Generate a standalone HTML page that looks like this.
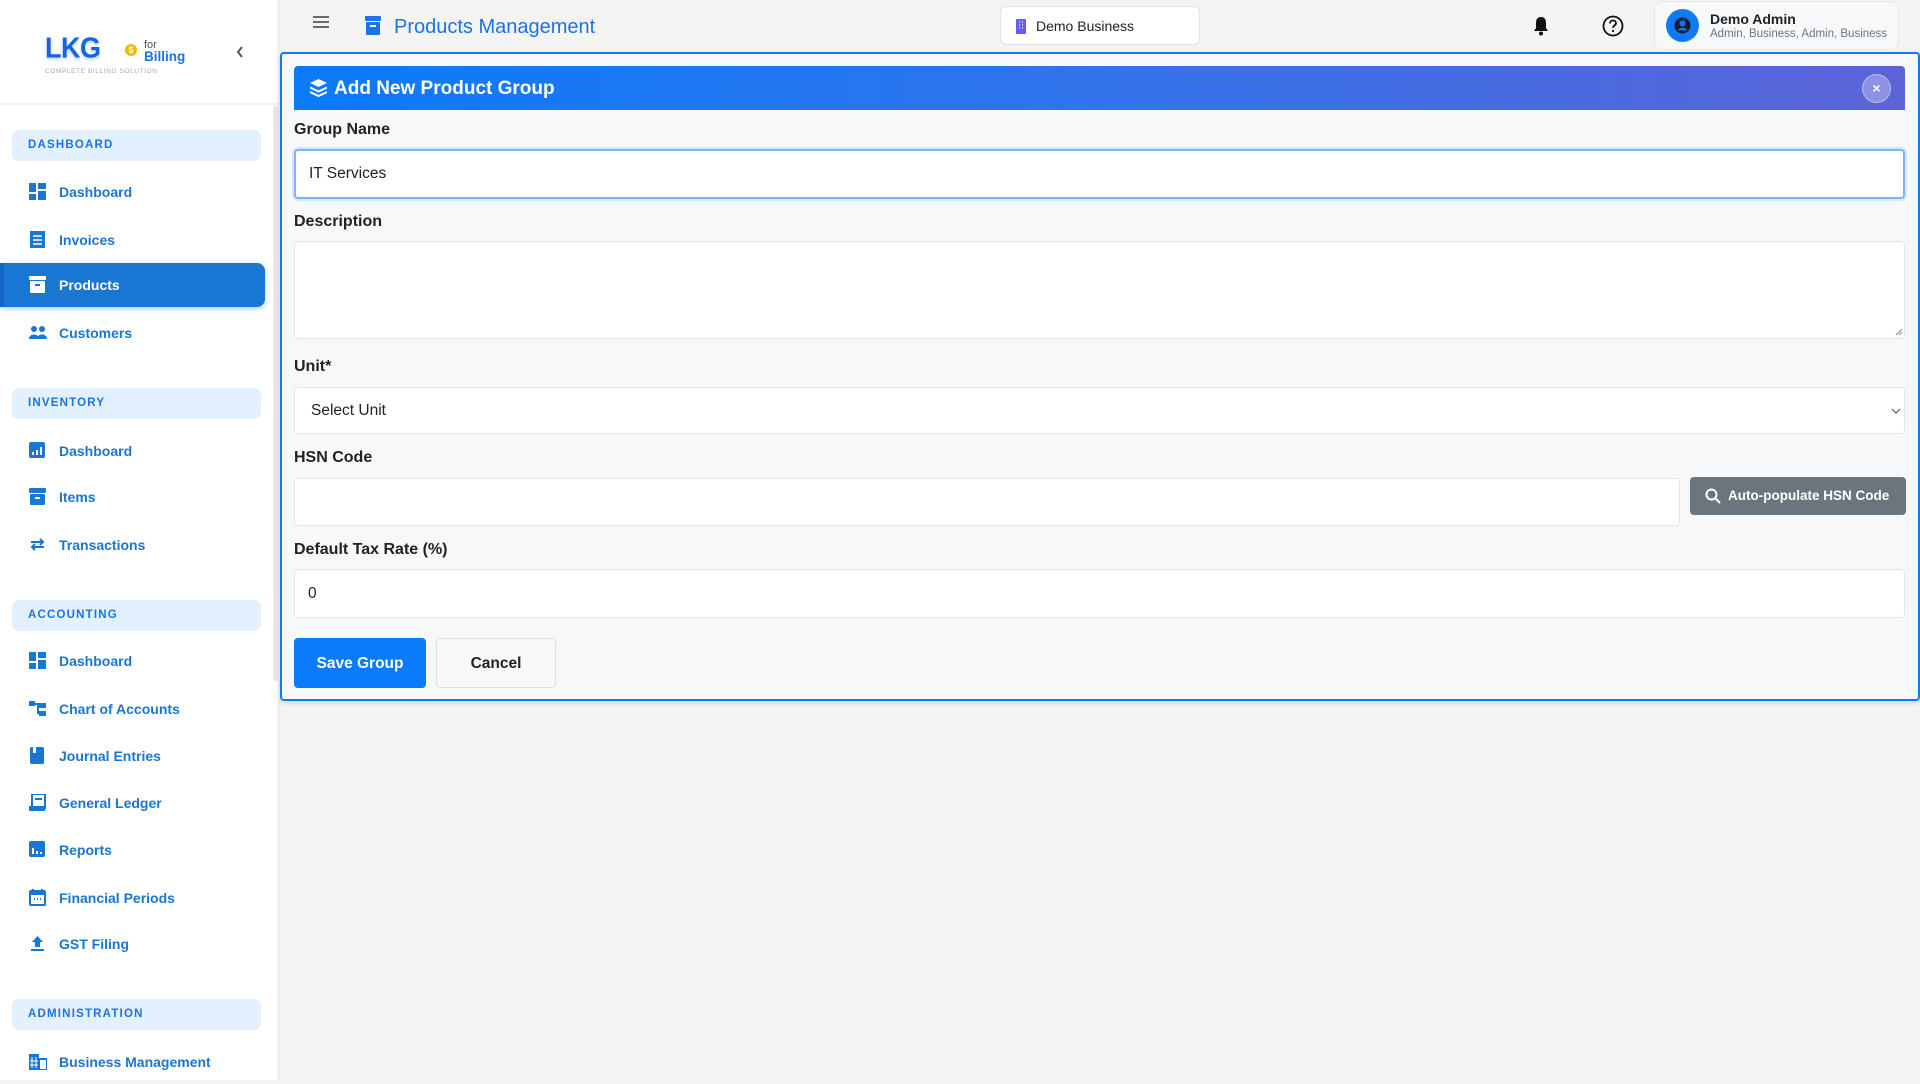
<!DOCTYPE html>
<html><head><meta charset="utf-8"><style>
*{box-sizing:border-box;margin:0;padding:0}
body{width:1920px;height:1080px;overflow:hidden;background:#f4f4f4;font-family:"Liberation Sans",sans-serif;position:relative;color:#212529}
.abs{position:absolute}
#sb{left:0;top:0;width:279px;height:1080px;background:#fff;border-right:1px solid #e6e6e6}
.sec{position:absolute;left:12px;width:249px;height:31px;background:#e3f0fd;border-radius:7px;color:#1a73e8;font-size:11.5px;font-weight:bold;letter-spacing:1.2px;padding-left:16px;line-height:31px}
.it{position:absolute;left:0;width:265px;height:44px;line-height:44px;padding-left:59px;font-size:14px;font-weight:bold;color:#1976d2}
.it svg{position:absolute;left:29px;top:13px}
.act{background:#1976d2;color:#fff;border-radius:0 8px 8px 0;border-left:4px solid #1565c0;box-shadow:0 2px 6px rgba(25,118,210,.35)}
label{position:absolute;left:294px;font-size:16px;font-weight:bold;color:#222}
.in{position:absolute;left:294px;width:1611px;background:#fff;border:1px solid #e3e5e8;border-radius:4px;font-size:15.5px;padding-left:13px;display:flex;align-items:center;color:#222}
</style></head><body>
<div id="sb" class="abs">
 <div class="abs" style="left:0;top:103px;width:279px;border-top:2px solid #eef0f2"></div>
 <div class="abs" style="left:45px;top:33px;font-size:27px;font-weight:900;color:#1565e0;letter-spacing:-0.5px;text-shadow:0 2px 3px rgba(21,101,224,.3);transform:scaleY(1.05)">LKG</div>
 <div class="abs" style="left:125px;top:44px;width:12px;height:12px;border-radius:50%;background:#f5b800;color:#fff;font-size:9px;font-weight:bold;text-align:center;line-height:12px">$</div>
 <div class="abs" style="left:144px;top:39px;font-size:11px;color:#555">for</div>
 <div class="abs" style="left:144px;top:49px;font-size:13.5px;font-weight:bold;color:#1a73e8">Billing</div>
 <div class="abs" style="left:45px;top:68px;font-size:6.5px;color:#aaa;letter-spacing:.6px">COMPLETE BILLING SOLUTION</div>
 <svg class="abs" style="left:235px;top:45px" width="10" height="14" viewBox="0 0 10 14"><path d="M7 2L3 7l4 5" stroke="#555" stroke-width="2" fill="none"/></svg>
 <div class="abs" style="left:273px;top:106px;width:6px;height:575px;background:#e8e8ea;border-radius:3px"></div>

 <div class="sec" style="top:130px">DASHBOARD</div>
 <div class="it" style="top:170px"><svg width="17" height="17"><rect x="0" y="0" width="7" height="9" fill="#1976d2"/><rect x="9" y="0" width="8" height="6" fill="#1976d2"/><rect x="0" y="11" width="7" height="6" fill="#1976d2"/><rect x="9" y="8" width="8" height="9" fill="#1976d2"/></svg>Dashboard</div>
 <div class="it" style="top:218px"><svg width="17" height="17"><rect x="1" y="0" width="15" height="17" fill="#1976d2"/><path d="M4 5h9M4 9h9M4 13h9" stroke="#fff" stroke-width="1.5"/></svg>Invoices</div>
 <div class="it act" style="top:263px;padding-left:55px"><svg width="17" height="17" style="left:25px"><rect x="0" y="0" width="17" height="4" rx="1" fill="#fff"/><rect x="1" y="5" width="15" height="12" rx="1" fill="#fff"/><rect x="6" y="8" width="5" height="2" fill="#1976d2"/></svg>Products</div>
 <div class="it" style="top:311px"><svg width="18" height="17"><circle cx="5" cy="5" r="3" fill="#1976d2"/><circle cx="13" cy="5" r="3" fill="#1976d2"/><path d="M0 15c0-6 10-6 10 0zM8 15c0-6 10-6 10 0z" fill="#1976d2"/></svg>Customers</div>

 <div class="sec" style="top:388px">INVENTORY</div>
 <div class="it" style="top:429px"><svg width="17" height="17"><rect width="16" height="16" rx="2" fill="#1976d2"/><path d="M4 13v-3M8 13v-5M12 13v-8" stroke="#fff" stroke-width="2"/></svg>Dashboard</div>
 <div class="it" style="top:475px"><svg width="17" height="17"><rect x="0" y="0" width="17" height="5" rx="1" fill="#1976d2"/><rect x="1" y="6" width="15" height="11" rx="1" fill="#1976d2"/><rect x="6" y="9" width="5" height="2" fill="#fff"/></svg>Items</div>
 <div class="it" style="top:523px"><svg width="17" height="17"><path d="M2 6h12M11 3l3 3-3 3M15 11H3M6 8l-3 3 3 3" stroke="#1976d2" stroke-width="2" fill="none"/></svg>Transactions</div>

 <div class="sec" style="top:600px">ACCOUNTING</div>
 <div class="it" style="top:639px"><svg width="17" height="17"><rect x="0" y="0" width="7" height="9" fill="#1976d2"/><rect x="9" y="0" width="8" height="6" fill="#1976d2"/><rect x="0" y="11" width="7" height="6" fill="#1976d2"/><rect x="9" y="8" width="8" height="9" fill="#1976d2"/></svg>Dashboard</div>
 <div class="it" style="top:687px"><svg width="17" height="17"><rect x="0" y="1" width="6" height="5" fill="#1976d2"/><rect x="10" y="3" width="7" height="5" fill="#1976d2"/><rect x="10" y="11" width="7" height="5" fill="#1976d2"/><path d="M6 4h3v9h1" stroke="#1976d2" stroke-width="2" fill="none"/></svg>Chart of Accounts</div>
 <div class="it" style="top:734px"><svg width="17" height="17"><rect x="1" y="0" width="14" height="17" rx="2" fill="#1976d2"/><rect x="4" y="0" width="3" height="6" fill="#fff"/></svg>Journal Entries</div>
 <div class="it" style="top:781px"><svg width="17" height="17"><rect x="3" y="0" width="13" height="14" fill="none" stroke="#1976d2" stroke-width="2"/><rect x="0" y="12" width="16" height="5" fill="#1976d2"/><path d="M6 5h7" stroke="#1976d2" stroke-width="2"/></svg>General Ledger</div>
 <div class="it" style="top:828px"><svg width="17" height="17"><rect width="16" height="16" rx="2" fill="#1976d2"/><path d="M4 13v-6M8 13v-3M12 13v-2" stroke="#fff" stroke-width="2"/></svg>Reports</div>
 <div class="it" style="top:876px"><svg width="17" height="17"><rect x="1" y="2" width="15" height="14" rx="1" fill="none" stroke="#1976d2" stroke-width="2"/><rect x="1" y="2" width="15" height="4" fill="#1976d2"/><path d="M4 0v3M13 0v3M5 10h1M8 10h1M11 10h1" stroke="#1976d2" stroke-width="2"/></svg>Financial Periods</div>
 <div class="it" style="top:922px"><svg width="17" height="17"><path d="M8.5 1L3 7h3v5h5V7h3z" fill="#1976d2"/><rect x="2" y="14" width="13" height="2" fill="#1976d2"/></svg>GST Filing</div>

 <div class="sec" style="top:999px">ADMINISTRATION</div>
 <div class="it" style="top:1040px"><svg width="18" height="17"><rect x="0" y="1" width="10" height="16" fill="#1976d2"/><rect x="10" y="6" width="8" height="11" fill="none" stroke="#1976d2" stroke-width="2"/><path d="M3 4v11M7 4v11M1 8h8M1 12h8" stroke="#fff" stroke-width="1"/></svg>Business Management</div>
</div>

<!-- topbar -->
<svg class="abs" style="left:313px;top:16px" width="16" height="12"><path d="M0 1h16M0 6h16M0 11h16" stroke="#555" stroke-width="1.8"/></svg>
<svg class="abs" style="left:365px;top:16px" width="16" height="19"><rect x="0" y="0" width="16" height="5" rx="1" fill="#1a73e8"/><rect x="1" y="6" width="14" height="13" rx="1" fill="#1a73e8"/><rect x="5" y="9" width="6" height="2" fill="#fff"/></svg>
<div class="abs" style="left:394px;top:16px;font-size:20px;color:#1a73e8">Products Management</div>
<div class="abs" style="left:1000px;top:6px;width:200px;height:39px;border:1px solid #dfe1e5;border-radius:6px;background:#fff"></div>
<svg class="abs" style="left:1016px;top:19px" width="10" height="15"><rect width="10" height="15" rx="1" fill="#6b5bf5"/><path d="M3 3h1M6 3h1M3 6h1M6 6h1M3 9h1M6 9h1" stroke="#fff" stroke-width="1.2"/></svg>
<div class="abs" style="left:1036px;top:18px;font-size:14px;color:#222">Demo Business</div>
<svg class="abs" style="left:1533px;top:16px" width="16" height="20"><path d="M8 1c-4 0-5 3-5 6v5l-2 3h14l-2-3V7c0-3-1-6-5-6z" fill="#111"/><circle cx="8" cy="17.5" r="2" fill="#111"/></svg>
<svg class="abs" style="left:1602px;top:15px" width="22" height="22"><circle cx="11" cy="11" r="9.5" fill="none" stroke="#111" stroke-width="1.8"/><path d="M8 8.5c0-2 1.5-3 3-3s3 1 3 2.7c0 2.3-3 2.3-3 4.6" stroke="#111" stroke-width="1.8" fill="none"/><circle cx="11" cy="16" r="1.1" fill="#111"/></svg>
<div class="abs" style="left:1654px;top:1px;width:245px;height:49px;border:1px solid #e3e6ea;border-radius:8px;background:#f7f8fa"></div>
<div class="abs" style="left:1666px;top:9px;width:33px;height:33px;border-radius:50%;background:#0d7bf7"></div>
<svg class="abs" style="left:1674px;top:17px" width="17" height="17"><circle cx="8.5" cy="8.5" r="8" fill="#1a1a2e"/><circle cx="8.5" cy="6.5" r="3" fill="#0d7bf7"/><path d="M3.5 13.5c2-3.5 8-3.5 10 0" fill="#0d7bf7"/></svg>
<div class="abs" style="left:1710px;top:11px;font-size:14px;font-weight:bold;color:#222">Demo Admin</div>
<div class="abs" style="left:1710px;top:28px;font-size:11.5px;color:#6c757d">Admin, Business, Admin, Business</div>

<!-- card -->
<div class="abs" style="left:280px;top:52px;width:1640px;height:649px;border:2px solid #0d7bf7;border-radius:4px;background:#f7f8fa;box-shadow:0 2px 6px rgba(0,0,0,.12)"></div>
<div class="abs" style="left:294px;top:66px;width:1611px;height:44px;border-radius:4px 4px 0 0;background:linear-gradient(90deg,#0a7bfa 0%,#2d74ec 45%,#5d64d8 100%)"></div>
<svg class="abs" style="left:310px;top:79px" width="17" height="18"><path d="M8.5 0L17 4 8.5 8 0 4z" fill="#fff"/><path d="M0 8.5l8.5 4 8.5-4M0 13l8.5 4 8.5-4" stroke="#fff" stroke-width="2" fill="none"/></svg>
<div class="abs" style="left:334px;top:78px;font-size:19px;font-weight:bold;color:#fff">Add New Product Group</div>
<div class="abs" style="left:1862px;top:74px;width:29px;height:29px;border-radius:50%;background:rgba(255,255,255,.3);border:1px solid rgba(255,255,255,.4);color:#fff;font-size:14px;font-weight:bold;text-align:center;line-height:27px">×</div>

<label style="top:121px">Group Name</label>
<div class="in" style="top:149px;height:50px;border:2px solid #7cb4fb;box-shadow:0 0 0 2px rgba(13,110,253,.12)">IT Services</div>
<label style="top:213px">Description</label>
<div class="in" style="top:241px;height:98px"></div>
<svg class="abs" style="left:1895px;top:328px" width="8" height="8"><path d="M7 1L1 7M7 4L4 7" stroke="#888"/></svg>
<label style="top:358px">Unit*</label>
<div class="in" style="top:387px;height:47px;padding-left:16px">Select Unit</div>
<svg class="abs" style="left:1891px;top:408px" width="10" height="6"><path d="M1 1l4 4 4-4" stroke="#444" fill="none"/></svg>
<label style="top:449px">HSN Code</label>
<div class="in" style="top:478px;width:1386px;height:48px"></div>
<div class="abs" style="left:1690px;top:477px;width:216px;height:38px;background:#6c757d;border-radius:4px;color:#fff;font-size:13.5px;font-weight:bold;line-height:38px;padding-left:38px;white-space:nowrap">Auto-populate HSN Code</div>
<svg class="abs" style="left:1705px;top:488px" width="16" height="16"><circle cx="6.5" cy="6.5" r="5" stroke="#fff" stroke-width="2" fill="none"/><path d="M10 10l5 5" stroke="#fff" stroke-width="2.2"/></svg>
<label style="top:541px">Default Tax Rate (%)</label>
<div class="in" style="top:569px;height:49px">0</div>
<div class="abs" style="left:294px;top:638px;width:132px;height:50px;background:#0a7bfa;border-radius:4px;color:#fff;font-size:15.5px;font-weight:bold;text-align:center;line-height:52px">Save Group</div>
<div class="abs" style="left:436px;top:638px;width:120px;height:50px;background:#f7f8fa;border:1px solid #dfe1e5;border-radius:4px;color:#222;font-size:15.5px;font-weight:bold;text-align:center;line-height:50px">Cancel</div>
</body></html>
